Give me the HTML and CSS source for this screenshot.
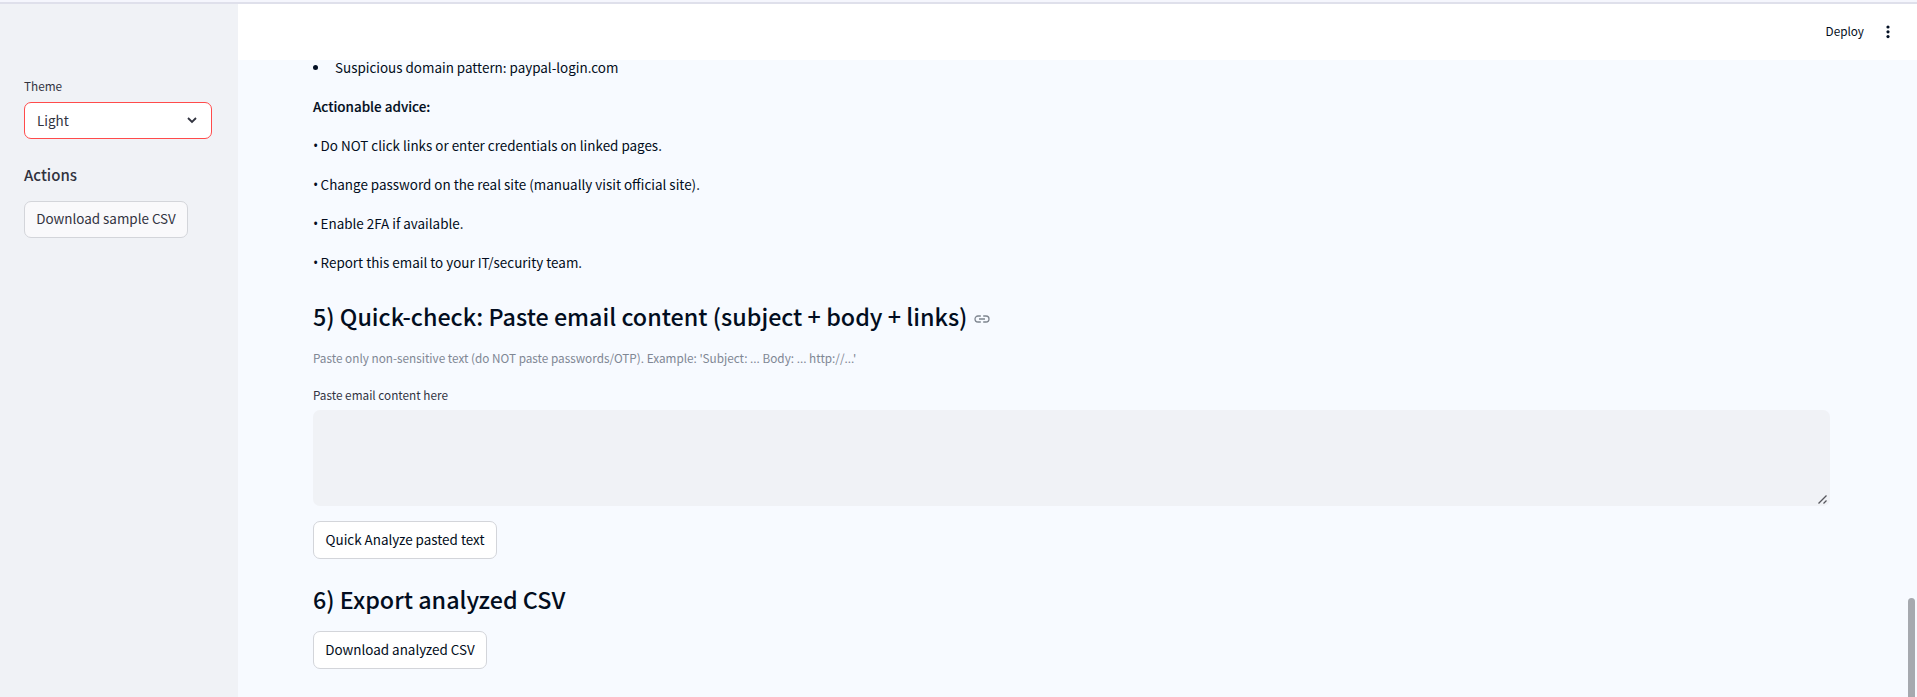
FILE: index.html
```html
<!DOCTYPE html>
<html lang="en">
<head>
<meta charset="utf-8">
<title>Email analyzer</title>
<link rel="stylesheet" href="styles.css">
</head>
<body>
<div class="strip"></div>
<div class="app">
  <aside class="sidebar">
    <label class="label">Theme</label>
    <div class="select"><span>Light</span>
      <svg class="chevron" viewBox="0 0 10 7"><path d="M1 1l4 4 4-4"/></svg>
    </div>
    <h3 class="side-title">Actions</h3>
    <button class="btn btn-side"><span>Download sample CSV</span></button>
  </aside>
  <main class="main">
    <header class="header">
      <span class="deploy">Deploy</span>
      <svg class="dots" viewBox="0 0 4 14"><circle cx="2" cy="2" r="1.6"/><circle cx="2" cy="6.8" r="1.6"/><circle cx="2" cy="11.6" r="1.6"/></svg>
    </header>
    <div class="content">
      <div class="item"><i class="disc"></i><span>Suspicious domain pattern: paypal-login.com</span></div>
      <p class="text strong">Actionable advice:</p>
      <p class="text"><span class="bullet">•</span>Do NOT click links or enter credentials on linked pages.</p>
      <p class="text"><span class="bullet">•</span>Change password on the real site (manually visit official site).</p>
      <p class="text"><span class="bullet">•</span>Enable 2FA if available.</p>
      <p class="text"><span class="bullet">•</span>Report this email to your IT/security team.</p>
      <h2 class="title title-check"><span>5) Quick-check: Paste email content (subject + body + links)</span>
        <svg class="link" viewBox="0 0 16 8"><path d="M6.8 1H4a3 3 0 0 0 0 6h2.8M9.2 1H12a3 3 0 0 1 0 6H9.2M5 4h6"/></svg>
      </h2>
      <p class="caption">Paste only non-sensitive text (do NOT paste passwords/OTP). Example: 'Subject: ... Body: ... http://...'</p>
      <label class="label label-main">Paste email content here</label>
      <div class="area"><svg class="grip" viewBox="0 0 9 9"><path d="M.5 8.5l8-8M5.5 8.5l3-3"/></svg></div>
      <button class="btn btn-quick"><span>Quick Analyze pasted text</span></button>
      <h2 class="title title-export"><span>6) Export analyzed CSV</span></h2>
      <button class="btn btn-export"><span>Download analyzed CSV</span></button>
    </div>
    <div class="thumb"></div>
  </main>
</div>
</body>
</html>
```
FILE: styles.css
```css
* { box-sizing: border-box; margin: 0; padding: 0; }
body {
  width: 1917px; height: 697px; overflow: hidden;
  font-family: "Noto Sans CJK SC", "Noto Sans", sans-serif;
  font-size: 13.43px; line-height: 22px; color: #020d20;
  background: #f7faff;
}
svg { fill: none; display: block; flex: none; }
.strip { height: 4px; background: #f5f6fd; border-bottom: 2px solid #dfe0eb; }
.app { display: flex; height: 693px; }
.sidebar { width: 238px; background: #f0f2f6; padding: 72px 24px 0; color: #31333f; }
.label { display: block; height: 22px; font-size: 11.75px; line-height: 20px; color: #31333f; }
.select {
  width: 188px; height: 37px; margin-top: 4px; padding: 0 14px 2px 12px;
  display: flex; align-items: center; justify-content: space-between;
  border: 1px solid #ff4b4b; border-radius: 7px; background: #fff;
}
.chevron { width: 10px; height: 7px; margin-top: 2px; stroke: #31333f; stroke-width: 1.8; }
.side-title { margin-top: 24px; height: 25px; font-size: 15px; font-weight: 500; line-height: 23px; }
.btn {
  display: flex; align-items: center; justify-content: center;
  height: 38px; padding-bottom: 2px; border: 1px solid #d3d5da; border-radius: 7px;
  background: #fff; color: inherit; font: inherit; white-space: nowrap;
}
.btn-side { width: 164px; height: 37px; margin-top: 13px; padding-bottom: 3px; background: #f9f9fb; }
.main { flex: 1; position: relative; }
.header {
  height: 56px; background: #fff; padding-right: 27px;
  display: flex; align-items: center; justify-content: flex-end; gap: 22px;
}
.deploy { font-size: 11.75px; margin-top: -2px; }
.dots { width: 4px; height: 14px; fill: #031024; }
.content { width: 1592px; padding: 0 0 0 75px; white-space: nowrap; }
.item { height: 16px; display: flex; align-items: center; gap: 17px; }
.item span { margin-top: -2px; }
.disc { width: 5px; height: 5px; margin-top: -1px; border-radius: 50%; background: #031024; }
.text { margin-top: 15px; height: 24px; display: flex; }
.item + .text { margin-top: 19px; }
.bullet { width: 7.6px; padding-top: 1px; font-family: "Open Sans", sans-serif; font-size: 14px; line-height: 22px; }
.strong { font-weight: 500; -webkit-text-stroke: 0.15px; }
.title { display: flex; gap: 7px; font-size: 23.32px; font-weight: 500; line-height: 30px; height: 32px; }
.title-check { margin-top: 26px; }
.link { width: 16px; height: 8px; margin-top: 14px; stroke: #7e858f; stroke-width: 1.3; }
.caption { margin-top: 14px; height: 24px; font-size: 11.75px; color: #7f8794; }
.label-main { margin-top: 14px; }
.area {
  width: 1517px; height: 96px; margin-top: 3px; padding: 0 3px 2px 0;
  display: flex; align-items: flex-end; justify-content: flex-end;
  border-radius: 7px; background: #f0f2f6;
}
.grip { width: 9px; height: 9px; stroke: #55565c; stroke-width: 1.3; }
.btn-quick { width: 184px; margin-top: 15px; }
.title-export { margin-top: 25px; }
.btn-export { width: 174px; margin-top: 15px; }
.thumb {
  position: absolute; right: 2px; top: 594px; width: 7px; height: 110px;
  border-radius: 4px; background: #a6a9af;
}
```
